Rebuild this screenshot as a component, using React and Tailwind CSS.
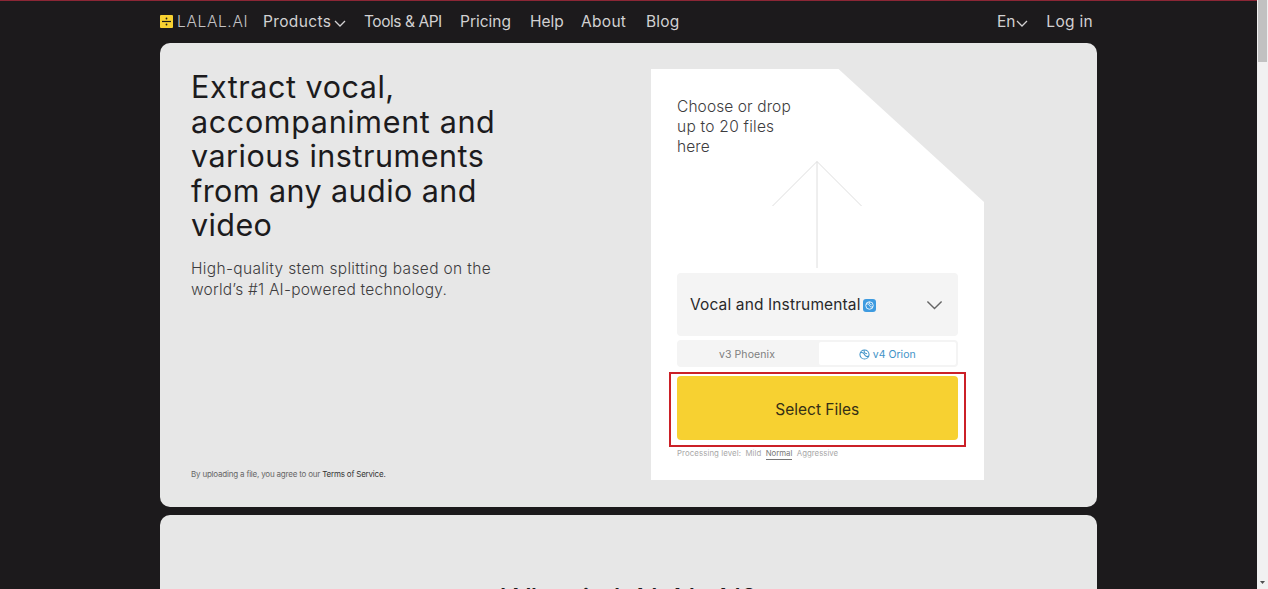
import clsx from 'clsx';

const NAV_LINKS = [
  { label: 'Products', width: 'w-[101px]', tracking: 'tracking-[0.35px]', hasMenu: true },
  { label: 'Tools & API', width: 'w-[96px]', tracking: 'tracking-[-0.45px]' },
  { label: 'Pricing', width: 'w-[70px]' },
  { label: 'Help', width: 'w-[51px]' },
  { label: 'About', width: 'w-[65px]', tracking: 'tracking-[0.3px]' },
  { label: 'Blog', width: 'w-[40px]', tracking: 'tracking-[0.2px]' },
];

const TITLE_LINES = [
  { text: 'Extract vocal,', tracking: 'tracking-[0.55px]' },
  { text: 'accompaniment and', tracking: 'tracking-[0.65px]' },
  { text: 'various instruments', tracking: 'tracking-[0.5px]' },
  { text: 'from any audio and', tracking: 'tracking-[0.42px]' },
  { text: 'video', tracking: 'tracking-[0.4px]' },
];

function Chevron({ className, strokeWidth = 1 }) {
  return (
    <svg viewBox="0 0 12 7" fill="none" stroke="currentColor" strokeWidth={strokeWidth} className={className}>
      <path d="M1 1L6 6L11 1" />
    </svg>
  );
}

function OrionIcon({ className }) {
  return (
    <svg viewBox="0 0 12 12" fill="none" stroke="currentColor" strokeWidth="1.1" className={className}>
      <circle cx="6" cy="6" r="5" />
      <path d="M1.300 4.200C4 3.200 5.200 4.200 6 6s2.400 2.700 4.600 1.600M5.600 1.200C5.400 3.400 7 5 8.800 5.200" />
    </svg>
  );
}

function Header() {
  return (
    <header className="flex h-[43px] shrink-0 items-center border-t border-[#8b2635] pl-[160px] pr-[164px] text-[15.500px] text-[#d2d1d2]">
      <div className="flex w-[103px] items-center gap-[4px]">
        <svg viewBox="0 0 13 13" className="mb-[2px] size-[13px]">
          <rect width="13" height="13" rx="1" fill="#f7d131" />
          <path d="M2 6.500h9" stroke="#1c1a1c" strokeWidth="1.200" />
          <circle cx="6.500" cy="3.500" r="0.900" fill="#1c1a1c" />
          <circle cx="6.500" cy="9.500" r="0.900" fill="#1c1a1c" />
        </svg>
        <span className="font-light tracking-[0.65px] text-[#c4c3c4]">LALAL.AI</span>
      </div>
      <nav className="flex flex-1">
        {NAV_LINKS.map((link) => (
          <a key={link.label} className={clsx('flex items-center gap-[3px] whitespace-nowrap', link.width, link.tracking)}>
            {link.label}
            {link.hasMenu && <Chevron strokeWidth={1.3} className="mt-[3px] h-[7px] w-[12px]" />}
          </a>
        ))}
      </nav>
      <a className="flex items-center gap-[1px]">
        En
        <Chevron strokeWidth={1.3} className="mt-[3px] h-[7px] w-[12px]" />
      </a>
      <a className="ml-[18px] tracking-[0.3px] whitespace-nowrap">Log in</a>
    </header>
  );
}

function UploadCard() {
  return (
    <div className="flex h-[411px] w-[333.500px] flex-col bg-white px-[26.500px] pt-[27.500px] [clip-path:polygon(0_0,188px_0,100%_133px,100%_100%,0_100%)]">
      <p className="text-[15.500px] leading-5 font-light whitespace-nowrap text-[#3d3c3e]">
        <span className="block tracking-[0.1px]">Choose or drop</span>
        <span className="block tracking-[0.250px]">up to 20 files</span>
        <span className="block tracking-[0.1px]">here</span>
      </p>
      <svg viewBox="0 0 90 108" fill="none" stroke="#dedede" className="mt-[4.500px] h-[108px] w-[90px] self-center">
        <path d="M45 0.500V107M0.500 45L45 0.500L89.500 45" />
      </svg>
      <button className="mt-[4px] flex h-[63px] shrink-0 items-center rounded bg-[#f4f4f4] pt-px pr-[15px] pl-[13px] text-[15.500px] tracking-[0.13px] text-[#29282a]">
        Vocal and Instrumental
        <span className="ml-[2px] flex size-[13px] items-center justify-center rounded-[3px] bg-[#3e9be0] text-white">
          <OrionIcon className="size-[9px]" />
        </span>
        <Chevron className="ml-auto h-[10px] w-[17px] text-[#656565]" />
      </button>
      <div className="mt-1 flex h-[27px] shrink-0 rounded bg-[#f4f4f4] p-[2px] text-[10.500px]">
        <span className="flex w-[140px] items-center justify-center pt-[2px] pr-[4px] tracking-[0.1px] text-[#7e7e7e]">v3 Phoenix</span>
        <span className="flex flex-1 items-center justify-center gap-[3px] rounded-[2px] bg-white pt-[2px] text-[#3f93c8]">
          <OrionIcon className="size-[11px]" />
          v4 Orion
        </span>
      </div>
      <button className="relative mt-[9px] h-[64px] shrink-0 rounded bg-[#f7d131] pt-[3px] text-[15.500px] text-[#352e15]">
        Select Files
        <span className="absolute -inset-x-2 -top-1 -bottom-[7px] border-2 border-[#cb2027]" />
      </button>
      <div className="mt-[8px] flex gap-[4.500px] text-[7.800px] leading-[11px] text-[#a8a8a8]">
        <span className="tracking-[0.1px]">Processing level:</span>
        <span>Mild</span>
        <span className="border-b border-[#777] text-[#777]">Normal</span>
        <span>Aggressive</span>
      </div>
    </div>
  );
}

function Hero() {
  return (
    <section className="flex h-[464px] w-[937px] shrink-0 rounded-[10px] bg-[#e7e7e7] pl-[31px] pt-[26px]">
      <div className="flex w-[459.500px] flex-col">
        <h1 className="pt-px text-[30.500px] leading-[34.600px] whitespace-nowrap text-[#1c1b1d]">
          {TITLE_LINES.map((line) => (
            <span key={line.text} className={clsx('block', line.tracking)}>
              {line.text}
            </span>
          ))}
        </h1>
        <p className="mt-[15px] text-[15.500px] leading-[21px] font-light whitespace-nowrap text-[#3d3c3e]">
          <span className="block tracking-[0.350px]">High-quality stem splitting based on the</span>
          <span className="block tracking-[0.230px]">world’s #1 AI-powered technology.</span>
        </p>
        <p className="mt-auto mb-[27px] text-[8px] leading-3 tracking-[-0.2px] whitespace-nowrap text-[#666]">
          By uploading a file, you agree to our <span className="text-[#333]">Terms of Service.</span>
        </p>
      </div>
      <UploadCard />
    </section>
  );
}

function Scrollbar() {
  return (
    <div className="flex w-[11px] shrink-0 flex-col items-center justify-between bg-[#f1f1f1]">
      <div className="h-[62px] w-[9px] bg-[#c1c1c1]" />
      <svg viewBox="0 0 5 3" className="mb-[5px] h-[3px] w-[5px]">
        <path d="M0 0h5L2.500 3z" fill="#505050" />
      </svg>
    </div>
  );
}

export default function App() {
  return (
    <div className="flex h-[589px] w-[1268px] overflow-hidden bg-[#1c1a1c] font-['Inter','Liberation_Sans',sans-serif]">
      <div className="flex min-w-0 flex-1 flex-col">
        <Header />
        <main className="flex flex-1 flex-col gap-2 overflow-hidden pl-[160px]">
          <Hero />
          <section className="h-[120px] w-[937px] shrink-0 rounded-t-[10px] bg-[#e7e7e7] pt-[67.500px] text-center">
            <h2 className="text-[30.500px] leading-[34.600px] tracking-[-0.450px] text-[#1c1b1d]">What is LALAL.AI?</h2>
          </section>
        </main>
      </div>
      <Scrollbar />
    </div>
  );
}
